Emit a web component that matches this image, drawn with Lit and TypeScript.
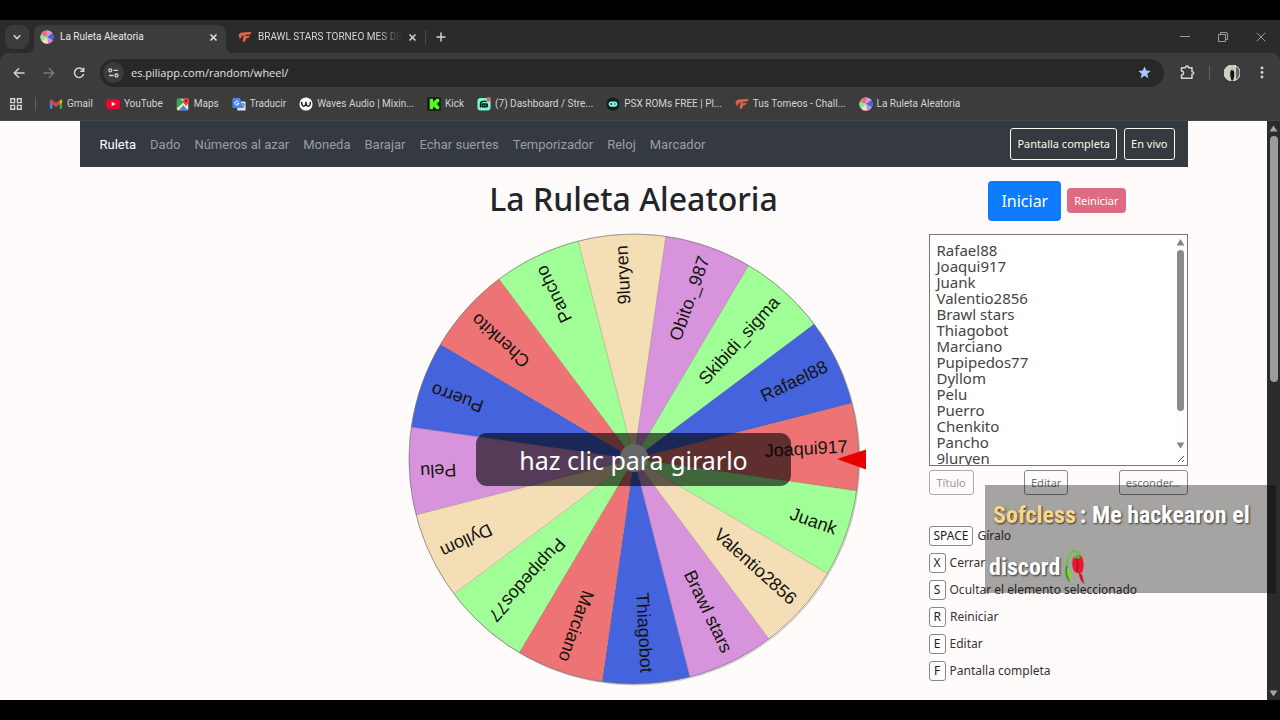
import { LitElement, html, svg, css } from "lit";
import { customElement, property, state } from "lit/decorators.js";
import { classMap } from "lit/directives/class-map.js";

const NAMES = [
  "Rafael88", "Joaqui917", "Juank", "Valentio2856", "Brawl stars", "Thiagobot",
  "Marciano", "Pupipedos77", "Dyllom", "Pelu", "Puerro", "Chenkito", "Pancho",
  "9luryen", "Obito._987", "Skibidi_sigma",
];
const COLORS = ["#4563dc", "#ee7374", "#a0ff97", "#f3deb5", "#d794dc"];

const wheelIcon = svg`
  <circle cx="8" cy="8" r="7.5" fill="#e9dff0"/>
  <path d="M8 8V.5A7.500 7.500 0 0 1 14 3.500Z" fill="#d794dc"/>
  <path d="M8 8 14 3.500A7.500 7.500 0 0 1 14.500 12Z" fill="#4563dc"/>
  <path d="M8 8 14.500 12A7.500 7.500 0 0 1 9 15.500Z" fill="#c98ae8"/>
  <path d="M8 8 9 15.500A7.500 7.500 0 0 1 2.500 13Z" fill="#f3deb5"/>
  <path d="M8 8 2.500 13A7.500 7.500 0 0 1 1 5.500Z" fill="#7ff08a"/>
  <path d="M8 8 1 5.500A7.500 7.500 0 0 1 8 .5Z" fill="#ee6c7c"/>`;
const torneoIcon = svg`
  <path d="M.5 6.500Q1 3 5 2.800L15.500 2 14 5 9 5.500 8.500 7 13.500 6.500 12 9 9.500 9.300 8 13 5 13.500 6 9 6.500 6Q4 6 3.500 9L1.500 10.500Q2.500 8 .5 6.500Z" fill="#e0644a"/>`;

const ICONS: Record<string, unknown> = {
  wheel: wheelIcon,
  torneo: torneoIcon,
  gmail: svg`
    <path d="M1 4v9.500h3V7Z" fill="#4285f4"/><path d="M15 4v9.500h-3V7Z" fill="#34a853"/>
    <path d="M12 4.500 13.500 3Q15 2.500 15 4.500V6l-3 2.500Z" fill="#fbbc04"/>
    <path d="M1 4.500Q1 2.300 3 3l5 4 4-3.200v4.500L8 11.500 1 6Z" fill="#ea4335"/>`,
  youtube: svg`<rect y="2.500" width="16" height="11.500" rx="3" fill="#f00033"/><path d="M6.500 5.500v5.200L11 8.100Z" fill="#fff"/>`,
  maps: svg`
    <rect x="1" y="2" width="13" height="13" rx="1.500" fill="#e8eaed"/>
    <path d="M1 3.500V13L9.500 6 5 2H2.500Q1 2 1 3.500Z" fill="#34a853"/>
    <path d="M2.500 15 8 9l5.500 6Z" fill="#4285f4"/>
    <path d="m1 13 8-7 1 2-7 7H2Q1 15 1 13Z" fill="#fbe9b0"/>
    <path d="M11.500 1a3.500 3.500 0 0 1 3.500 3.500C15 7 12 8 11.500 11 11 8 8 7 8 4.500A3.500 3.500 0 0 1 11.500 1Z" fill="#ea4335"/>
    <circle cx="11.500" cy="4.500" r="1.300" fill="#7c1d14"/>`,
  traducir: svg`
    <rect x="6" y="5" width="9.500" height="10.500" rx="1" fill="#dfe3ea"/>
    <path d="M1.500 1h7.500l3.500 11.500H1.500Q.5 12.500.5 11.500V2Q.5 1 1.500 1Z" fill="#4a86e8"/>
    <path d="M7.500 5.500A2.300 2.300 0 1 0 8 7.200H5.800" fill="none" stroke="#fff" stroke-width="1.100"/>
    <path d="M10.500 8h4M12.500 7v1M14 8q-.8 3-3 4M11.500 9.500q1 2 2.500 2.500" fill="none" stroke="#4d6fa8" stroke-width="1"/>`,
  waves: svg`<circle cx="8" cy="8" r="7.500" fill="#fff"/><path d="M3 5.500q0 5 2.500 5T8 5.500q0 5 2.500 5t2.500-5" fill="none" stroke="#222" stroke-width="1.700"/>`,
  kick: svg`<rect x=".5" y=".5" width="15" height="15" fill="#0b0e0b"/><path d="M3 2h4v3h1.500V3.500H10V2h4v4h-1.500v1.500H11v1h1.500V10H14v4h-4v-1.500H8.500V11H7v3H3Z" fill="#53fc18"/>`,
  dash: svg`
    <rect x=".5" y="1" width="15" height="14.500" rx="3.500" fill="#80f5d2"/>
    <path d="M4 12V8q0-3 3-3h4" fill="none" stroke="#09161d" stroke-width="1.600"/>
    <rect x="5" y="7" width="7.500" height="5" rx="1.500" fill="#09161d"/>
    <path d="M7 9.500h1.200M9.500 9.500h1.200" stroke="#80f5d2" stroke-width="1.200"/>
    <circle cx="13.500" cy="2.500" r="2.500" fill="#e06068"/>`,
  psx: svg`<circle cx="8" cy="8" r="7.500" fill="#08201e"/><rect x="3" y="5" width="10" height="6" rx="3" fill="#86f0dc"/><path d="M5 8h2M6 7v2M9.500 8h1.500" stroke="#08201e" stroke-width="1"/>`,
};

@customElement("site-icon")
class SiteIcon extends LitElement {
  @property() name = "wheel";
  static styles = css`:host { display: block; flex: none; width: 14px; height: 14px; } svg { display: block; width: 100%; height: 100%; }`;
  render() {
    return html`<svg viewBox="0 0 16 16" aria-hidden="true">${ICONS[this.name]}</svg>`;
  }
}

@customElement("browser-bar")
class BrowserBar extends LitElement {
  static styles = css`
    :host { display: block; flex: none; font-family: Roboto, "Open Sans", sans-serif; font-size: 10px; line-height: 14px; color: #d4d4d4; background: #2b2b2b; }
    button { font: inherit; color: inherit; border: 0; padding: 0; margin: 0; background: none; display: grid; place-items: center; flex: none; }
    a { color: inherit; text-decoration: none; }
    svg { display: block; fill: none; stroke: currentColor; }
    .tabs { display: flex; align-items: center; height: 33px; padding: 0 0 0 5px; }
    .chevron { width: 24px; height: 24px; border-radius: 8px; background: #3b3b3b; }
    .tab { display: flex; align-items: center; box-sizing: border-box; align-self: flex-end; height: 28px; padding: 0 5px 4px 6px; }
    .tab site-icon { margin-right: 6px; }
    .tab.active { position: relative; width: 192px; margin-left: 5px; border-radius: 8px 8px 0 0; background: #3c3c3c; color: #e8e8e8; }
    .tab.active::before, .tab.active::after { content: ""; position: absolute; bottom: 0; width: 8px; height: 8px; }
    .tab.active::before { left: -8px; background: radial-gradient(circle at 0 0, #2b2b2b 8px, #3c3c3c 9px); }
    .tab.active::after { right: -8px; background: radial-gradient(circle at 100% 0, #2b2b2b 8px, #3c3c3c 9px); }
    .tab.other { width: 199px; padding-left: 12px; }
    .label { flex: 1; white-space: nowrap; }
    .other .label { -webkit-mask-image: linear-gradient(90deg, #000 82%, rgba(0, 0, 0, 0.1) 96%); mask-image: linear-gradient(90deg, #000 82%, rgba(0, 0, 0, 0.1) 96%); }
    .close { width: 16px; height: 16px; }
    .rule { width: 1px; height: 14px; background: #4c4c4c; }
    .plus { width: 30px; height: 24px; }
    .spacer { flex: 1; }
    .win { width: 38px; height: 28px; color: #9c9c9c; }
    .toolbar { display: flex; align-items: center; height: 39px; padding: 0 10px 0 4px; background: #3c3c3c; border-radius: 8px 8px 0 0; }
    .tool { width: 30px; height: 28px; }
    .toolbar .rule { margin-left: 7px; background: #606060; }
    .dim { color: #7b7b7b; }
    .address { flex: 1; display: flex; align-items: center; gap: 7px; height: 28px; margin: 0 8px 0 6px; padding: 0 13px 0 3px; border-radius: 14px; background: #282828; }
    .site { width: 21px; height: 21px; border-radius: 50%; background: #3b3b3b; }
    .address input { flex: 1; min-width: 0; border: 0; padding: 0; outline: 0; background: none; color: #e3e3e3; font: 11px/18px "Open Sans", "Noto Sans", sans-serif; }
    .avatar { width: 44px; }
    .marks { display: flex; align-items: center; gap: 13px; height: 29px; box-sizing: border-box; padding: 0 10px 4px; background: #3c3c3c; border-bottom: 1px solid #464646; white-space: nowrap; }
    .marks a { display: flex; align-items: center; gap: 4px; }
    .marks .rule { background: #606060; }
  `;
  private marks = [
    ["gmail", "Gmail"], ["youtube", "YouTube"], ["maps", "Maps"], ["traducir", "Traducir"],
    ["waves", "Waves Audio | Mixin..."], ["kick", "Kick"], ["dash", "(7) Dashboard / Stre..."],
    ["psx", "PSX ROMs FREE | Pl..."], ["torneo", "Tus Torneos - Chall..."], ["wheel", "La Ruleta Aleatoria"],
  ];
  private cross = html`<svg width="9" height="9" viewBox="0 0 9 9" stroke-width="1.5"><path d="m1.500 1.500 6 6m0-6-6 6"/></svg>`;
  render() {
    return html`
      <div class="tabs">
        <button class="chevron" aria-label="Buscar pestañas"><svg width="10" height="8" viewBox="0 0 10 8" stroke-width="1.600"><path d="m1.800 2.300 3.200 3.200 3.200-3.200"/></svg></button>
        <div class="tab active"><site-icon name="wheel"></site-icon><span class="label">La Ruleta Aleatoria</span><button class="close" aria-label="Cerrar">${this.cross}</button></div>
        <div class="tab other"><site-icon name="torneo"></site-icon><span class="label">BRAWL STARS TORNEO MES DE</span><button class="close" aria-label="Cerrar">${this.cross}</button></div>
        <span class="rule"></span>
        <button class="plus" aria-label="Nueva pestaña"><svg width="10" height="10" viewBox="0 0 10 10" stroke-width="1.500"><path d="M5 .5v9M.5 5h9"/></svg></button>
        <span class="spacer"></span>
        <button class="win" aria-label="Minimizar"><svg width="10" height="10" viewBox="0 0 10 10"><path d="M0 4.500h10"/></svg></button>
        <button class="win" aria-label="Restaurar"><svg width="10" height="10" viewBox="0 0 10 10"><path d="M.5 2.500h7v7h-7zM2.500 2V.5h5.500q1.500 0 1.500 1.500v5.500H8"/></svg></button>
        <button class="win" aria-label="Cerrar ventana"><svg width="10" height="10" viewBox="0 0 10 10"><path d="m.8.8 8.400 8.400m0-8.400L.8 9.200"/></svg></button>
      </div>
      <div class="toolbar">
        <button class="tool" aria-label="Atrás"><svg width="12" height="12" viewBox="0 0 12 12" stroke-width="1.500"><path d="M11.500 6H1.500M6 1.300 1.300 6 6 10.700"/></svg></button>
        <button class="tool dim" aria-label="Adelante"><svg width="12" height="12" viewBox="0 0 12 12" stroke-width="1.500"><path d="M.5 6h10M6 1.300 10.700 6 6 10.700"/></svg></button>
        <button class="tool" aria-label="Recargar"><svg width="12" height="12" viewBox="0 0 12 12" stroke-width="1.500"><path d="M10.300 3.500A4.700 4.700 0 1 0 10.700 7M10.700.8v3.400H7.200"/></svg></button>
        <div class="address">
          <button class="site" aria-label="Información del sitio"><svg width="11" height="10" viewBox="0 0 11 10" stroke-width="1.300"><circle cx="2.300" cy="2.300" r="1.500"/><path d="M5.500 2.300H10M1 7.500h4.500"/><circle cx="8.500" cy="7.500" r="1.500"/></svg></button>
          <input aria-label="Dirección" .value=${"es.piliapp.com/random/wheel/"}>
          <svg width="13" height="13" viewBox="0 0 14 14"><path d="m7 .5 1.900 4.400 4.700.4-3.600 3.100 1.100 4.700L7 10.600l-4.100 2.500L4 8.400.4 5.300l4.700-.4Z" fill="#a8c7fa" stroke="none"/></svg>
        </div>
        <button class="tool" aria-label="Extensiones"><svg width="15" height="15" viewBox="0 0 15 15" stroke-width="1.500" stroke-linejoin="round"><path d="M1.500 2.700h4q0-1.700 1.500-1.700t1.500 1.700h3.500v4q1.800 0 1.800 1.300T12 9.300v4H1.500V10q2 0 2-2t-2-2Z"/></svg></button>
        <span class="rule"></span>
        <button class="avatar" aria-label="Perfil"><svg width="16" height="16" viewBox="0 0 16 16" stroke="none"><circle cx="8" cy="8" r="8" fill="#d3cdbc"/><path d="M11.500.8a8 8 0 0 1 0 14.400Z" fill="#6a655b"/><path d="M6.500 5.500Q6.500 2.500 8.200 2.500T9.800 5.500L10.800 7v4L9.500 16H7L5.800 11V7Z" fill="#111"/><circle cx="8.200" cy="4" r="1" fill="#ad8e78"/></svg></button>
        <button class="close" aria-label="Menú"><svg width="4" height="13" viewBox="0 0 4 13"><g fill="currentColor" stroke="none"><circle cx="2" cy="2" r="1.400"/><circle cx="2" cy="6.500" r="1.400"/><circle cx="2" cy="11" r="1.400"/></g></svg></button>
      </div>
      <nav class="marks">
        <svg width="12" height="12" viewBox="0 0 12 12" stroke-width="1.400"><path d="M.8.8h3.800v3.800H.8zM7.400.8h3.800v3.800H7.400zM.8 7.400h3.800v3.800H.8zM7.400 7.400h3.800v3.800H7.400z"/></svg>
        <span class="rule"></span>
        ${this.marks.map(([icon, text]) => html`<a href="#"><site-icon name=${icon}></site-icon>${text}</a>`)}
      </nav>`;
  }
}

@customElement("name-wheel")
class NameWheel extends LitElement {
  static styles = css`
    :host { display: grid; place-items: center; }
    svg { grid-area: 1 / 1; display: block; width: 450px; height: 450px; overflow: visible; }
    .name { font: 18px "Liberation Sans", sans-serif; text-anchor: end; dominant-baseline: central; fill: #14140f; }
    .spin { grid-area: 1 / 1; z-index: 1; border: 0; border-radius: 11px; padding: 10px 43px 9px; background: rgba(0, 0, 0, 0.6); color: #fff; font: 25px/34px "Noto Sans", sans-serif; white-space: nowrap; }
  `;
  private slice(name: string, i: number) {
    const step = 360 / NAMES.length;
    const mid = -25.600 + i * step;
    const at = (deg: number) => {
      const r = (deg * Math.PI) / 180;
      return `${(225 * Math.cos(r)).toFixed(2)} ${(225 * Math.sin(r)).toFixed(2)}`;
    };
    const color = i === NAMES.length - 1 ? COLORS[2] : COLORS[i % COLORS.length];
    return svg`
      <path d="M0 0 L${at(mid - step / 2)} A225 225 0 0 1 ${at(mid + step / 2)} Z" fill=${color} stroke="rgba(80,80,60,.35)" stroke-width=".5"/>
      <text class="name" x="214" y="-1" transform="rotate(${mid})">${name}</text>`;
  }
  render() {
    return html`
      <svg viewBox="-225 -225 450 450" role="img" aria-label="Ruleta">
        <circle r="225" cx="1" cy="1" fill="none" stroke="rgba(0,0,0,.2)" stroke-width="1"/>
        ${NAMES.map((n, i) => this.slice(n, i))}
        <circle r="225" fill="none" stroke="#777" stroke-width=".6"/>
        <circle r="14" cy="-1" fill="#fff"/>
        <path d="M203 0 232-9.500v20Z" fill="#e60000"/>
      </svg>
      <button class="spin">haz clic para girarlo</button>`;
  }
}

@customElement("side-panel")
class SidePanel extends LitElement {
  static styles = css`
    :host { display: block; font-size: 12px; line-height: 20px; color: #333; }
    .box { position: relative; }
    textarea { display: block; box-sizing: border-box; width: 100%; height: 232px; margin: 0; border: 1px solid #767676; border-radius: 0; padding: 7px 20px 0 7px; outline: 0; overflow: hidden; resize: none; background: #fff; color: #444; font: 15px/16px "Noto Sans", sans-serif; white-space: pre; }
    .bar { position: absolute; top: 1px; right: 1px; bottom: 1px; width: 13px; display: flex; flex-direction: column; align-items: center; padding: 3px 0 2px; box-sizing: border-box; background: #fdfdfd; }
    .thumb { width: 7px; height: 161px; margin-top: 4px; border-radius: 4px; background: #8a8a8a; }
    .fill { flex: 1; }
    .down { margin-bottom: 5px; }
    .actions { display: flex; justify-content: space-between; margin-top: 4px; }
    .actions button { box-sizing: border-box; height: 25px; border: 1px solid #888; border-radius: 3px; padding: 0 6px; background: none; font: 11px/23px "Noto Sans", sans-serif; color: #6c757d; }
    .actions .muted { padding: 0 7px; color: #999; border-color: #aaa; }
    ul { list-style: none; margin: 31px 0 0; padding: 0; display: grid; gap: 7px; }
    li { display: flex; align-items: center; gap: 4px; height: 20px; }
    kbd { box-sizing: border-box; min-width: 17px; height: 20px; border: 1px solid #888; border-radius: 3px; padding: 0 4px; text-align: center; background: #fff; color: #222; font: 12px/18px "Noto Sans", sans-serif; }
  `;
  private keys = [["SPACE", "Gíralo"], ["X", "Cerrar"], ["S", "Ocultar el elemento seleccionado"], ["R", "Reiniciar"], ["E", "Editar"], ["F", "Pantalla completa"]];
  render() {
    return html`
      <div class="box">
        <textarea aria-label="Elementos" .value=${NAMES.join("\n")}></textarea>
        <div class="bar">
          <svg width="9" height="8" viewBox="0 0 9 8"><path d="M4.500 1 8.500 7.500h-8Z" fill="#858585"/></svg>
          <div class="thumb"></div><div class="fill"></div>
          <svg class="down" width="9" height="7" viewBox="0 0 9 7"><path d="M4.500 6.500.5.500h8Z" fill="#858585"/></svg>
          <svg width="9" height="9" viewBox="0 0 9 9"><path d="m2 8 6-6M6 8l2-2" stroke="#555" fill="none"/></svg>
        </div>
      </div>
      <div class="actions"><button class="muted">Título</button><button>Editar</button><button>esconder...</button></div>
      <ul>${this.keys.map(([k, t]) => html`<li><kbd>${k}</kbd><span>${t}</span></li>`)}</ul>`;
  }
}

@customElement("app-root")
class AppRoot extends LitElement {
  @state() private current = "Ruleta";
  static styles = css`
    :host { display: flex; flex-direction: column; position: relative; box-sizing: border-box; height: 100vh; padding: 20px 0; overflow: hidden; background: #000; font-family: "Noto Sans", "Open Sans", sans-serif; }
    .view { flex: 1; min-height: 0; display: flex; background: #fffbfb; }
    .page { flex: 1; min-width: 0; overflow: hidden; }
    .container { max-width: 1108px; margin: 0 auto; }
    .navbar { display: flex; align-items: center; gap: 14px; box-sizing: border-box; height: 46px; padding: 0 13px 0 20px; background: #343a40; font: 13px/20px Roboto, sans-serif; white-space: nowrap; }
    .navbar a { padding-top: 2px; color: #9a9da0; text-decoration: none; }
    .navbar a.active { color: #fff; }
    .tools { display: flex; gap: 7px; margin-left: auto; }
    .tools button { height: 32px; border: 1px solid #f8f9e8; border-radius: 3px; padding: 0 6px; background: none; color: #f8f9e8; font: 11px/20px "Noto Sans", sans-serif; }
    .layout { display: grid; grid-template-columns: 259px minmax(450px, 1fr) 259px; grid-template-rows: 67px auto; }
    h1 { grid-column: 2; margin: 0; padding-bottom: 4px; align-self: center; text-align: center; color: #212529; font-size: 32px; font-weight: 500; line-height: 40px; white-space: nowrap; }
    .start { grid-column: 3; display: flex; align-items: center; justify-content: center; gap: 6px; padding-right: 2px; }
    .start button { border: 0; border-radius: 4px; color: #fff; }
    .go { height: 40px; padding: 0 13px; background: #0d7bfb; font: 16px/24px "Noto Sans", sans-serif; }
    .reset { height: 25px; padding: 0 7px; background: #df6b83; font: 11px/20px "Noto Sans", sans-serif; }
    name-wheel { grid-column: 2; align-self: start; }
    side-panel { grid-column: 3; }
    .scroll { flex: none; display: flex; flex-direction: column; justify-content: space-between; align-items: center; width: 13px; padding: 4px 0 3px; box-sizing: border-box; background: #2b2b2b; }
    .thumb { flex: none; width: 8px; height: 246px; margin: 4px 0 auto; border-radius: 4px; background: #9b9b9b; }
    .chat { position: absolute; right: 4px; bottom: 127px; width: 291px; height: 108px; box-sizing: border-box; padding: 4px 0 0 4px; background: rgba(0, 0, 0, 0.35); color: #fff; font: bold 24px/52px "Roboto Condensed", "Liberation Sans Narrow", Roboto, sans-serif; text-shadow: 1px 1px 2px #333; white-space: nowrap; }
    .chat p { margin: 0; display: flex; align-items: center; gap: 4px; }
    .first { padding-left: 4px; }
    .user { color: #f9d787; }
  `;
  private links = ["Ruleta", "Dado", "Números al azar", "Moneda", "Barajar", "Echar suertes", "Temporizador", "Reloj", "Marcador"];
  render() {
    return html`
      <browser-bar></browser-bar>
      <div class="view">
        <main class="page">
          <div class="container">
            <nav class="navbar">
              ${this.links.map((l) => html`<a href="#" class=${classMap({ active: l === this.current })} @click=${() => (this.current = l)}>${l}</a>`)}
              <div class="tools"><button>Pantalla completa</button><button>En vivo</button></div>
            </nav>
            <div class="layout">
              <h1>La Ruleta Aleatoria</h1>
              <div class="start"><button class="go">Iniciar</button><button class="reset">Reiniciar</button></div>
              <name-wheel></name-wheel>
              <side-panel></side-panel>
            </div>
          </div>
        </main>
        <div class="scroll">
          <svg width="9" height="7" viewBox="0 0 9 7"><path d="M4.500.5 8.500 6.500h-8Z" fill="#a5a5a5"/></svg>
          <div class="thumb"></div>
          <svg width="9" height="7" viewBox="0 0 9 7"><path d="M4.500 6.500.5.500h8Z" fill="#a5a5a5"/></svg>
        </div>
      </div>
      <aside class="chat">
        <p class="first"><span class="user">Sofcless</span><span>: Me hackearon el</span></p>
        <p><span>discord</span>
          <svg width="21" height="36" viewBox="0 0 21 36" fill="none">
            <path d="M5 33Q1 26 2.500 17 3.500 4 8.500 2.500q6-1.500 7.500 5" stroke="#6cc23c" stroke-width="2.200"/>
            <path d="M5 32Q.5 24 3 17" stroke="#3f8a2c" stroke-width="1.500"/>
            <path d="M3.500 19q5.500 2 4.500 12Q2.500 28 3.500 19Z" fill="#7fd04a"/>
            <path d="M9 9q4-4 8.500-2 3.500 7 1 16-5 3-8.500-1-3-6-1-13Z" fill="#ee1530"/>
            <path d="M12 8q3 6 1 15" stroke="#b50d24" stroke-width="1.500"/>
            <path d="M9 9q4-5 8.500-2l-3 3Z" fill="#5cab35"/>
            <path d="m14.500 23 3.500 2.500 2.500 9.500q-5-3-6-12Z" fill="#cf1830"/>
          </svg>
        </p>
      </aside>`;
  }
}
